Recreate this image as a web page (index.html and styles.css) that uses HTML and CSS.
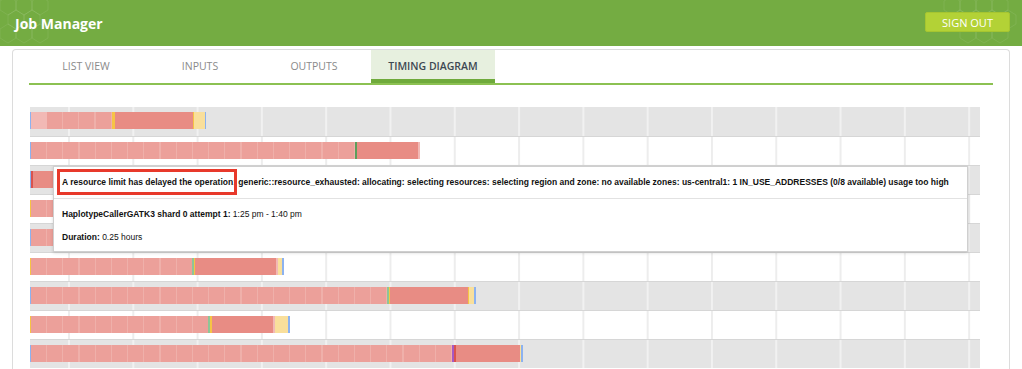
FILE: index.html
```html
<!DOCTYPE html>
<html lang="en">
<head>
    <meta charset="UTF-8">
    <title>Job Manager - Timing Diagram</title>
    <link rel="stylesheet" href="styles.css">
</head>
<body>
    <div class="topbar">
        <svg class="hex hex-left" width="70" height="46" viewBox="0 0 70 46">
            <g fill="none" stroke="#ffffff" stroke-opacity="0.08" stroke-width="1">
                <path d="M8 -4 l8 5 v9 l-8 5 l-8 -5 v-9 z"/>
                <path d="M24 -4 l8 5 v9 l-8 5 l-8 -5 v-9 z"/>
                <path d="M40 -4 l8 5 v9 l-8 5 l-8 -5 v-9 z"/>
                <path d="M16 10 l8 5 v9 l-8 5 l-8 -5 v-9 z"/>
                <path d="M32 10 l8 5 v9 l-8 5 l-8 -5 v-9 z"/>
                <path d="M8 24 l8 5 v9 l-8 5 l-8 -5 v-9 z"/>
                <path d="M24 24 l8 5 v9 l-8 5 l-8 -5 v-9 z"/>
                <path d="M40 24 l8 5 v9 l-8 5 l-8 -5 v-9 z"/>
            </g>
        </svg>
        <svg class="hex hex-right" width="90" height="46" viewBox="0 0 90 46">
            <g fill="none" stroke="#ffffff" stroke-opacity="0.08" stroke-width="1">
                <path d="M20 -4 l8 5 v9 l-8 5 l-8 -5 v-9 z"/>
                <path d="M36 -4 l8 5 v9 l-8 5 l-8 -5 v-9 z"/>
                <path d="M52 -4 l8 5 v9 l-8 5 l-8 -5 v-9 z"/>
                <path d="M68 -4 l8 5 v9 l-8 5 l-8 -5 v-9 z"/>
                <path d="M28 10 l8 5 v9 l-8 5 l-8 -5 v-9 z"/>
                <path d="M44 10 l8 5 v9 l-8 5 l-8 -5 v-9 z"/>
                <path d="M60 10 l8 5 v9 l-8 5 l-8 -5 v-9 z"/>
                <path d="M76 10 l8 5 v9 l-8 5 l-8 -5 v-9 z"/>
                <path d="M36 24 l8 5 v9 l-8 5 l-8 -5 v-9 z"/>
                <path d="M52 24 l8 5 v9 l-8 5 l-8 -5 v-9 z"/>
                <path d="M68 24 l8 5 v9 l-8 5 l-8 -5 v-9 z"/>
            </g>
        </svg>
        <div class="brand">Job Manager</div>
        <button class="signout">SIGN OUT</button>
    </div>

    <div class="card">
        <div class="tabs">
            <div class="tab">LIST VIEW</div>
            <div class="tab">INPUTS</div>
            <div class="tab">OUTPUTS</div>
            <div class="tab active">TIMING DIAGRAM</div>
        </div>

        <div class="timeline">
            <!-- fila 1 -->
            <div class="row shaded">
                <div class="bar">
                    <span class="seg blue" style="width:1px"></span>
                    <span class="seg pink" style="width:16px"></span>
                    <span class="seg salmon" style="width:65px"></span>
                    <span class="seg orange" style="width:3px"></span>
                    <span class="seg dark" style="width:78px"></span>
                    <span class="seg orange" style="width:1px"></span>
                    <span class="seg yellow" style="width:11px"></span>
                    <span class="seg blue" style="width:1px"></span>
                </div>
            </div>
            <!-- fila 2 -->
            <div class="row">
                <div class="bar">
                    <span class="seg blue" style="width:1px"></span>
                    <span class="seg salmon" style="width:324px"></span>
                    <span class="seg green" style="width:2px"></span>
                    <span class="seg dark" style="width:61px"></span>
                    <span class="seg pink" style="width:2px"></span>
                </div>
            </div>
            <!-- fila 3 -->
            <div class="row shaded">
                <div class="bar">
                    <span class="seg blue" style="width:1px"></span>
                    <span class="seg red" style="width:2px"></span>
                    <span class="seg dark" style="width:40px"></span>
                </div>
            </div>
            <!-- fila 4 -->
            <div class="row">
                <div class="bar">
                    <span class="seg orange" style="width:1px"></span>
                    <span class="seg salmon" style="width:60px"></span>
                </div>
            </div>
            <!-- fila 5 -->
            <div class="row shaded">
                <div class="bar">
                    <span class="seg blue" style="width:1px"></span>
                    <span class="seg salmon" style="width:60px"></span>
                </div>
            </div>
            <!-- fila 6 -->
            <div class="row">
                <div class="bar">
                    <span class="seg orange" style="width:1px"></span>
                    <span class="seg salmon" style="width:161px"></span>
                    <span class="seg mint" style="width:2px"></span>
                    <span class="seg orange" style="width:1px"></span>
                    <span class="seg dark" style="width:81px"></span>
                    <span class="seg pink" style="width:2px"></span>
                    <span class="seg yellow" style="width:4px"></span>
                    <span class="seg blue" style="width:2px"></span>
                </div>
            </div>
            <!-- fila 7 -->
            <div class="row shaded">
                <div class="bar">
                    <span class="seg blue" style="width:1px"></span>
                    <span class="seg salmon" style="width:356px"></span>
                    <span class="seg mint" style="width:2px"></span>
                    <span class="seg orange" style="width:1px"></span>
                    <span class="seg dark" style="width:78px"></span>
                    <span class="seg orange" style="width:1px"></span>
                    <span class="seg yellow" style="width:5px"></span>
                    <span class="seg blue" style="width:2px"></span>
                </div>
            </div>
            <!-- fila 8 -->
            <div class="row">
                <div class="bar">
                    <span class="seg orange" style="width:1px"></span>
                    <span class="seg salmon" style="width:177px"></span>
                    <span class="seg mint" style="width:2px"></span>
                    <span class="seg orange" style="width:2px"></span>
                    <span class="seg dark" style="width:61px"></span>
                    <span class="seg pink" style="width:2px"></span>
                    <span class="seg yellow" style="width:13px"></span>
                    <span class="seg blue" style="width:2px"></span>
                </div>
            </div>
            <!-- fila 9 -->
            <div class="row shaded">
                <div class="bar">
                    <span class="seg blue" style="width:1px"></span>
                    <span class="seg salmon" style="width:421px"></span>
                    <span class="seg purple" style="width:2px"></span>
                    <span class="seg red" style="width:2px"></span>
                    <span class="seg dark" style="width:64px"></span>
                    <span class="seg yellow" style="width:1px"></span>
                    <span class="seg blue" style="width:2px"></span>
                </div>
            </div>

            <div class="tooltip">
                <div class="tip-title">A resource limit has delayed the operation: generic::resource_exhausted: allocating: selecting resources: selecting region and zone: no available zones: us-central1: 1 IN_USE_ADDRESSES (0/8 available) usage too high</div>
                <div class="tip-body">
                    <p><b>HaplotypeCallerGATK3 shard 0 attempt 1:</b> 1:25 pm - 1:40 pm</p>
                    <p><b>Duration:</b> 0.25 hours</p>
                </div>
                <div class="highlight"></div>
            </div>
        </div>
    </div>
</body>
</html>
```

FILE: styles.css
```css
body {
    margin: 0;
    overflow: hidden;
    background: #ffffff;
    font-family: 'Open Sans', 'Liberation Sans', sans-serif;
    color: #333;
}

.topbar {
    position: relative;
    height: 46px;
    background: #74ac42;
    display: flex;
    align-items: center;
    justify-content: space-between;
    padding: 0 12px 0 15px;
}

.hex {
    position: absolute;
    top: 0;
}

.hex-left {
    left: 0;
}

.hex-right {
    right: 0;
}

.brand {
    position: relative;
    color: white;
    font-weight: bold;
    font-size: 14px;
}

.signout {
    position: relative;
    background: #b3d236;
    border: 1px solid #a6c530;
    color: white;
    font-family: inherit;
    font-size: 11px;
    width: 85px;
    height: 20px;
    padding: 0;
    border-radius: 2px;
    margin-top: -2px;
}

.card {
    margin: 3px 12px 0 12px;
    border: 1px solid #dcdcdc;
    border-bottom: none;
    border-radius: 4px 4px 0 0;
    padding: 0 16px;
    height: 330px;
}

.tabs {
    display: flex;
    height: 33px;
    border-bottom: 2px solid #8cc152;
}

.tab {
    width: 114px;
    text-align: center;
    line-height: 33px;
    font-size: 10.5px;
    color: #8a8a8a;
}

.tab.active {
    width: 124px;
    background: #e7f0df;
    color: #3d4852;
    font-weight: 600;
    box-shadow: inset 0 -4px 0 #6faa3c;
}

/* diagrama de tiempos */
.timeline {
    position: relative;
    margin: 22px 0 0 1px;
    width: 950px;
}

.row {
    border-top: 1px solid #d6d6d6;
    background-color: #ffffff;
    background-image: linear-gradient(90deg, #ededed 2px, transparent 2px);
    background-size: 64.3px 100%;
    background-position: 38px 0;
    padding-top: 5px;
    height: 23px;
}

.row.shaded {
    background-color: #e4e4e4;
    background-image: linear-gradient(90deg, #f1f1f1 2px, transparent 2px);
}

.row:first-child {
    border-top: none;
    height: 24px;
}

.bar {
    display: flex;
    height: 17px;
}

.seg {
    display: block;
    height: 100%;
    flex-shrink: 0;
}

.salmon {
    background: repeating-linear-gradient(90deg, #eca09a 0 15px, #efb0aa 15px 16.2px);
}

.dark { background: #e88c84; }
.pink { background: #f2b9b5; }
.yellow { background: #f9df9b; }
.orange { background: #f6c445; }
.blue { background: #8cb2f0; }
.green { background: #5d9e5b; }
.mint { background: #8ec596; }
.red { background: #d9534f; }
.purple { background: #a559c4; }

.tooltip {
    position: absolute;
    left: 23px;
    top: 59px;
    width: 913px;
    height: 84px;
    background: white;
    border: 1px solid #cfcfcf;
    box-shadow: 0 1px 3px rgba(0, 0, 0, 0.15);
    font-family: 'Liberation Sans', Arial, sans-serif;
    font-size: 8.5px;
    color: #111;
}

.tip-title {
    height: 31px;
    line-height: 31px;
    padding-left: 8px;
    font-weight: bold;
    border-bottom: 1px solid #e2e2e2;
    white-space: nowrap;
}

.tip-body {
    padding: 10px 8px 0 8px;
}

.tip-body p {
    margin: 0 0 13px 0;
    line-height: 10px;
}

.highlight {
    position: absolute;
    left: 3px;
    top: 2px;
    width: 174px;
    height: 20px;
    border: 3px solid #e8392b;
}
```
